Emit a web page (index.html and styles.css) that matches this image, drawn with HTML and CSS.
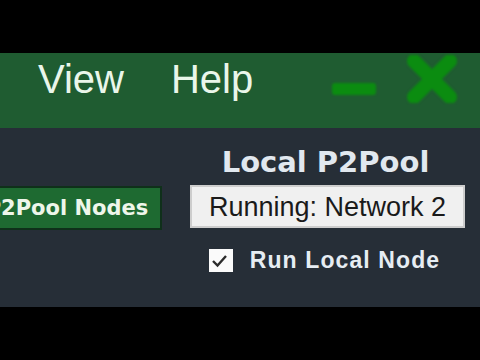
FILE: index.html
```html
<!DOCTYPE html>
<html lang="en">
<head>
<meta charset="utf-8">
<title>P2Pool</title>
<link rel="stylesheet" href="styles.css">
</head>
<body>
<div class="frame">
  <header class="menubar">
    <span class="menu">View</span>
    <span class="menu">Help</span>
    <svg class="winctl" width="125" height="48" viewBox="0 0 125 48" aria-hidden="true">
      <rect x="0" y="28" width="44" height="12" rx="3" fill="#0b8c10"/>
      <path d="M82 6 L118 42 M118 6 L82 42" stroke="#0b8c10" stroke-width="14" stroke-linecap="round"/>
    </svg>
  </header>
  <main class="panel">
    <div class="left">
      <button class="nodes">P2Pool Nodes</button>
    </div>
    <section class="local">
      <h2 class="title">Local P2Pool</h2>
      <div class="status">Running: Network 2</div>
      <label class="check">
        <span class="box">
          <svg width="24" height="23" viewBox="0 0 24 23" aria-hidden="true">
            <path d="M4 12 L8.5 16.5 L17 7" fill="none" stroke="#2b2b2b" stroke-width="2.4"/>
          </svg>
        </span>
        <span class="label">Run Local Node</span>
      </label>
    </section>
  </main>
</div>
</body>
</html>
```
FILE: styles.css
```css
html, body {
  margin: 0;
  padding: 0;
  background: #000;
}
body {
  width: 480px;
  height: 360px;
  overflow: hidden;
}
.frame {
  padding-top: 53px;
}
.menubar {
  height: 75px;
  background: #1f5c31;
  display: flex;
  align-items: flex-start;
  padding-left: 38px;
  box-sizing: border-box;
}
.menu {
  font-family: "Liberation Sans", Arial, sans-serif;
  font-size: 40px;
  line-height: 40px;
  color: #eaf6ea;
  margin-top: 6px;
  margin-right: 47px;
}
.winctl {
  margin-left: auto;
  margin-right: 23px;
  margin-top: 2px;
  filter: blur(0.8px);
}
.panel {
  height: 179px;
  background: #262e37;
  display: flex;
  align-items: flex-start;
  overflow: hidden;
}
.left {
  padding-top: 58px;
}
.nodes {
  display: block;
  margin: 0 0 0 -28px;
  width: 190px;
  height: 44px;
  padding: 0;
  box-sizing: border-box;
  background: #1e6a31;
  border: 2px solid #0f301a;
  color: #eef6ea;
  font-family: "DejaVu Sans", Verdana, sans-serif;
  font-weight: bold;
  font-size: 21px;
  line-height: 40px;
  text-align: center;
}
.local {
  margin-left: 28px;
  width: 275px;
  padding-top: 20px;
  display: flex;
  flex-direction: column;
  align-items: center;
}
.title {
  margin: 0;
  font-family: "DejaVu Sans", Verdana, sans-serif;
  font-weight: bold;
  font-size: 29px;
  line-height: 29px;
  letter-spacing: 0;
  color: #e1e8ef;
  padding-right: 4px;
}
.status {
  margin-top: 8px;
  width: 275px;
  height: 43px;
  box-sizing: border-box;
  background: #f0f0f0;
  border: 2px solid #cdcdcd;
  font-family: "Liberation Sans", Arial, sans-serif;
  font-size: 27px;
  line-height: 40px;
  color: #1a1a1a;
  text-align: center;
}
.check {
  margin-top: 21px;
  margin-right: 6px;
  display: flex;
  align-items: center;
  gap: 17px;
}
.box {
  width: 24px;
  height: 23px;
  background: #fafafa;
  display: block;
}
.box svg {
  display: block;
}
.label {
  font-family: "Liberation Sans", Arial, sans-serif;
  font-weight: bold;
  font-size: 23px;
  line-height: 23px;
  letter-spacing: 1.1px;
  color: #e6edf3;
}
```
